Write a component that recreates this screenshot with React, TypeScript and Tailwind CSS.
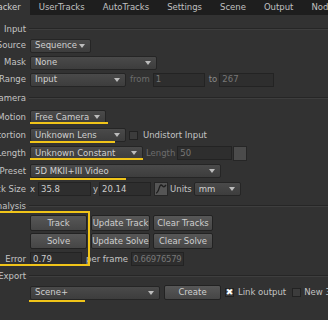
import React from 'react';

const font = "font-['DejaVu_Sans',sans-serif]";

function Arrow() {
  return (
    <svg width="6" height="4" viewBox="0 0 6 4" className="shrink-0">
      <polygon points="0,0 6,0 3,4" fill="#bdbdbd" />
    </svg>
  );
}

function Drop({ text, w }: { text: string; w: string }) {
  return (
    <div className={`flex items-center shrink-0 h-[14px] pl-[4px] pr-[5px] rounded-[2px] border border-[#252525] bg-linear-to-b from-[#4a4a4a] to-[#3d3d3d] text-[#d0d0d0] ${w}`}>
      <span className="flex-1 overflow-hidden">{text}</span>
      <Arrow />
    </div>
  );
}

function Field({ text, w, dim, tight }: { text: string; w: string; dim?: boolean; tight?: boolean }) {
  return (
    <div className={`flex items-center shrink-0 h-[14px] border border-[#232323] bg-[#2e2e2e] overflow-hidden ${tight ? 'px-[1px] tracking-[-0.3px]' : 'px-[2px]'} ${dim ? 'text-[#777]' : 'text-[#cccccc]'} ${w}`}>
      {text}
    </div>
  );
}

function Btn({ text, w, h = 'h-[16px]' }: { text: string; w: string; h?: string }) {
  return (
    <div className={`flex items-center justify-center shrink-0 ${h} rounded-[2px] border border-[#222] bg-linear-to-b from-[#575757] to-[#464646] text-[#cfcfcf] ${w}`}>
      {text}
    </div>
  );
}

function Check({ on }: { on?: boolean }) {
  return (
    <div className="flex items-center justify-center shrink-0 w-[9px] h-[9px] border border-[#222] bg-[#3c3c3c] text-white text-[9px] leading-none">
      {on ? '✖' : ''}
    </div>
  );
}

function Label({ text }: { text: string }) {
  return (
    <div className="w-[26px] shrink-0 flex justify-end">
      <span>{text}</span>
    </div>
  );
}

function Header({ text, h }: { text: string; h: string }) {
  return (
    <div className={`flex items-center ${h}`}>
      <Label text={text} />
      <div className="flex-1 ml-[3px] h-[2px] border-t border-[#262626] border-b border-b-[#3e3e3e]" />
    </div>
  );
}

function Row({ label, h = 'h-[18px]', children }: { label: string; h?: string; children: React.ReactNode }) {
  return (
    <div className={`flex items-center ${h}`}>
      <Label text={label} />
      <div className="ml-[4px] shrink-0 flex items-center">{children}</div>
    </div>
  );
}

const tabs = ['UserTracks', 'AutoTracks', 'Settings', 'Scene', 'Output', 'Node'];

export default function App() {
  return (
    <div className={`relative w-[328px] h-[320px] overflow-hidden whitespace-nowrap bg-[#323232] text-[8.5px] text-[#c4c4c4] ${font}`}>
      <div className="h-[15px] bg-[#1e1e1e] flex items-stretch">
        <div className="-ml-[19px] flex items-stretch">
          <div className="px-[9px] flex items-center bg-[#323232] text-[#cfcfcf]">Tracker</div>
          {tabs.map((t) => (
            <div key={t} className="px-[9px] flex items-center text-[#c0c0c0]">
              {t}
            </div>
          ))}
        </div>
      </div>

      <div className="pt-[6px]">
        <Header text="Input" h="h-[16px]" />
        <Row label="Source" h="h-[17px]">
          <Drop text="Sequence" w="w-[61px]" />
        </Row>
        <Row label="Mask" h="h-[17px]">
          <Drop text="None" w="w-[127px]" />
        </Row>
        <Row label="Range" h="h-[17px]">
          <Drop text="Input" w="w-[96px]" />
          <span className="ml-[4px] text-[#6c6c6c]">from</span>
          <div className="ml-[3px]"><Field text="1" w="w-[52px]" dim /></div>
          <span className="ml-[4px] text-[#8a8a8a]">to</span>
          <div className="ml-[2px]"><Field text="267" w="w-[55px]" dim /></div>
        </Row>

        <Header text="Camera" h="h-[20px]" />
        <Row label="Motion">
          <Drop text="Free Camera" w="w-[76px]" />
        </Row>
        <Row label="Distortion">
          <Drop text="Unknown Lens" w="w-[96px]" />
          <div className="ml-[3px]"><Check /></div>
          <span className="ml-[5px]">Undistort Input</span>
        </Row>
        <Row label="Focal Length">
          <Drop text="Unknown Constant" w="w-[113px]" />
          <span className="ml-[3px] text-[#6c6c6c]">Length</span>
          <div className="ml-[2px]"><Field text="50" w="w-[55px]" dim /></div>
          <div className="ml-[1px] w-[14px] h-[15px] border border-[#262626] bg-[#4b4b4b]" />
        </Row>
        <Row label="Film Back Preset">
          <Drop text="5D MKII+III Video" w="w-[191px]" />
        </Row>
        <Row label="Film Back Size">
          <span>x</span>
          <div className="ml-[3px]"><Field text="35.8" w="w-[53px]" /></div>
          <span className="ml-[2px]">y</span>
          <div className="ml-[1px]"><Field text="20.14" w="w-[52px]" /></div>
          <div className="ml-[3px] w-[14px] h-[14px] border border-[#262626] bg-[#555] flex items-center justify-center">
            <svg width="12" height="12" viewBox="0 0 12 12">
              <path d="M1 10 C4 10 4 2 6 2 C8 2 8 6 11 2" stroke="#1e1e1e" strokeWidth="1.3" fill="none" />
            </svg>
          </div>
          <span className="ml-[2px]">Units</span>
          <div className="ml-[2px]"><Drop text="mm" w="w-[47px]" /></div>
        </Row>

        <Header text="Analysis" h="h-[16px]" />
        <Row label="">
          <Btn text="Track" w="w-[57px]" />
          <div className="ml-[4px]"><Btn text="Update Track" w="w-[59px]" /></div>
          <div className="ml-[3px]"><Btn text="Clear Tracks" w="w-[60px]" /></div>
        </Row>
        <Row label="">
          <Btn text="Solve" w="w-[57px]" />
          <div className="ml-[4px]"><Btn text="Update Solve" w="w-[59px]" /></div>
          <div className="ml-[3px]"><Btn text="Clear Solve" w="w-[60px]" /></div>
        </Row>
        <Row label="Error">
          <Field text="0.79" w="w-[52px]" />
          <span className="ml-[4px]">per frame</span>
          <div className="ml-[3px]"><Field text="0.66976579" w="w-[53px]" dim tight /></div>
        </Row>

        <Header text="Export" h="h-[16px]" />
        <Row label="" h="h-[17px]">
          <Drop text="Scene+" w="w-[130px]" />
          <div className="ml-[4px]"><Btn text="Create" w="w-[57px]" h="h-[15px]" /></div>
          <div className="ml-[4px]"><Check on /></div>
          <span className="ml-[4px]">Link output</span>
          <div className="ml-[6px]"><Check /></div>
          <span className="ml-[3px]">New 3D</span>
        </Row>
      </div>

      {/* yellow annotations */}
      <div className="absolute left-[30px] top-[122px] w-[78px] h-[2px] bg-[#f0c419]" />
      <div className="absolute left-[30px] top-[141px] w-[85px] h-[2px] bg-[#f0c419]" />
      <div className="absolute left-[30px] top-[158px] w-[113px] h-[2px] bg-[#f0c419]" />
      <div className="absolute left-[30px] top-[178px] w-[96px] h-[2px] bg-[#f0c419]" />
      <div className="absolute -left-[2px] top-[211px] w-[92px] h-[55px] border-2 border-[#f0c419]" />
      <div className="absolute left-[29px] top-[300px] w-[56px] h-[2px] bg-[#f0c419]" />
    </div>
  );
}
